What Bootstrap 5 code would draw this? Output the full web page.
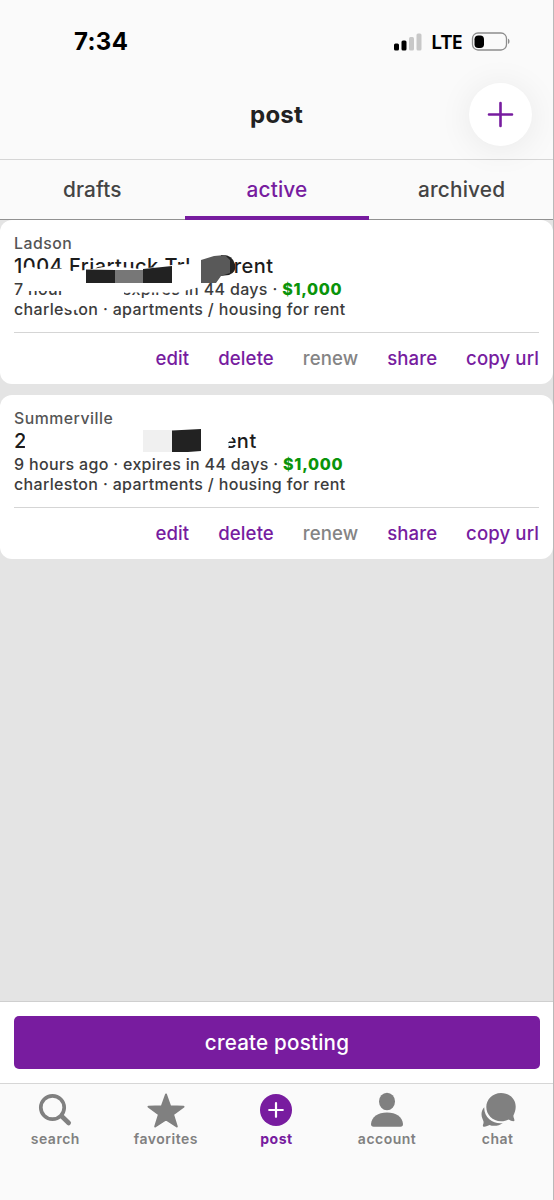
<!DOCTYPE html>
<html lang="en">
<head>
<meta charset="utf-8">
<meta name="viewport" content="width=device-width, initial-scale=1">
<title>post</title>
<link rel="stylesheet" href="https://cdn.jsdelivr.net/npm/bootstrap@5.3.0/dist/css/bootstrap.min.css">
<style>
:root{--purple:#771c9f}
body{font-family:Inter,"Liberation Sans",sans-serif;background:#e4e4e4;color:#3c3c3c}
.screen{height:1200px;width:554px;border-right:1px solid #b9b9b9;overflow:hidden}
.status-row{height:70px;padding:13px 42px 0 74px;color:#000}
.clock{font-size:24px;font-weight:700;letter-spacing:.35px}
.lte{font-size:20px;font-weight:600;line-height:26px;letter-spacing:-.7px;margin:0 9px 0 9px;font-family:"Noto Sans",sans-serif}
.top-area{background:#fafafa}
.title-row{height:90px;border-bottom:1px solid #d6d6d6}
.title-row h1{font-size:24px;font-weight:700;color:#222;letter-spacing:.2px;line-height:90px;margin:0}
.add-btn{right:21px;top:13px;width:63px;height:63px;background:#fff;box-shadow:0 3px 34px rgba(0,0,0,.075);border:0;padding:0}
.tab-row{height:60px;border-bottom:1px solid #919191}
.tab-row a{font-size:20.8px;font-weight:500;color:#444;text-decoration:none;line-height:59px;letter-spacing:.15px;height:60px;flex:0 0 184.67px}
.tab-row a.on{color:var(--purple);border-bottom:4px solid var(--purple)}
.post-card{height:164px;background:#fff;border-radius:12px;padding:14px 14px 0 14px;margin-bottom:11px;font-size:16px;font-weight:500;line-height:20px}
.place{letter-spacing:.5px;font-size:15.8px;color:#555}
.headline{font-size:20px;font-weight:500;line-height:25px;color:#1c1c1c;letter-spacing:.48px}
.meta{letter-spacing:.33px;font-size:16px}
.price{color:#0a940a;font-weight:800;letter-spacing:.7px}
.acts{border-top:1px solid #d5d5d5;margin-top:13px;height:51px;gap:28.9px}
.acts a{font-size:18.6px;font-weight:540;color:var(--purple);text-decoration:none;letter-spacing:.1px}
.acts a.off{color:#848484}
.redact{left:0;top:0;pointer-events:none}
.create-bar{height:82px;background:#fff;border-top:1px solid #cfcfcf;padding:14px 13px 0 14px}
.create-btn{height:53px;background:#781c9f;color:#fff;border:0;border-radius:5px;font-size:20.6px;font-weight:500;letter-spacing:.2px;padding:2px 0 0}
.tabbar{height:117px;background:#fafafa;border-top:1px solid #d6d6d6;padding:8px 0 0}
.tabbar a{width:110.7px;color:#808080;text-decoration:none;font-size:14px;font-weight:600;letter-spacing:.5px;line-height:18px}
.tabbar a.on{color:var(--purple);font-weight:700}
.tabbar svg{display:block;margin:0 auto 2px}
</style>
</head>
<body>
<div class="screen d-flex flex-column">
  <header class="top-area">
    <div class="status-row d-flex justify-content-between align-items-center">
      <span class="clock">7:34</span>
      <div class="d-flex align-items-center">
        <svg width="29" height="18" viewBox="0 0 29 18"><rect x="1" y="10.500" width="5" height="7" rx="1.500"/><rect x="8.500" y="7.500" width="5" height="10" rx="1.500"/><rect x="16" y="4" width="5" height="13.500" rx="1.500" fill="#c8c8c8"/><rect x="23.500" y="0.500" width="5" height="17" rx="1.500" fill="#c8c8c8"/></svg>
        <span class="lte">LTE</span>
        <svg width="40" height="20" viewBox="0 0 40 20"><rect x="1.500" y="1" width="34" height="17" rx="5.500" fill="none" stroke="#8d8d8d" stroke-width="1.300"/><rect x="3.500" y="3.500" width="9.500" height="12.500" rx="3.800"/><path d="M37 6.700c2 .6 2 4.600 0 5.200z" fill="#8d8d8d"/></svg>
      </div>
    </div>
    <div class="title-row text-center position-relative">
      <h1>post</h1>
      <button class="add-btn position-absolute rounded-circle" aria-label="new"><svg class="d-block mx-auto" width="27" height="27" viewBox="0 0 27 27"><path d="M13.500 2v23M2 13.500h23" stroke="#771c9f" stroke-width="2.600" stroke-linecap="round"/></svg></button>
    </div>
    <nav class="tab-row d-flex text-center">
      <a href="#">drafts</a><a href="#" class="on">active</a><a href="#">archived</a>
    </nav>
  </header>
  <main class="flex-grow-1">
    <article class="post-card position-relative">
      <div class="place">Ladson</div>
      <div class="headline">1004 Friartuck Trl <span class="d-inline-block" style="width:37px"></span>rent</div>
      <div class="meta">7 hours ago · expires in 44 days · <span class="price">$1,000</span></div>
      <div class="meta">charleston · apartments / housing for rent</div>
      <div class="acts d-flex justify-content-end align-items-center"><a href="#">edit</a><a href="#">delete</a><a class="off">renew</a><a href="#">share</a><a href="#">copy url</a></div>
      <svg class="redact position-absolute" width="300" height="100" viewBox="0 0 300 100">
        <path fill="#fff" d="M24 48L30 46L38 49L64 48.500L72 51L86 50L110 46L140 49L172 45L192 44L192 37L202 37L202 62L206 65L196 68L184 71L180 72.500L124 72.500L123 84L78 84L78 89Q71 92 65 88L64 80L62 71L28 71L23 66Z"/>
        <path fill="#fff" d="M63 62H123V82H63z"/>
        <path fill="#222" d="M86 49.500L115 50V63H86z M143 49L172 46V63H143z"/>
        <path fill="#777" d="M115 50H143V63H115z"/>
        <path fill="#222" d="M221 35Q232 34 235 44Q237 52 229 55L220 56z"/>
        <path fill="#595959" d="M201 40L214 36L225 35L230 40V53L221 56L216 63H201z"/>
      </svg>
    </article>
    <article class="post-card position-relative">
      <div class="place">Summerville</div>
      <div class="headline">2<span class="d-inline-block" style="width:190px"></span>rent</div>
      <div class="meta">9 hours ago · expires in 44 days · <span class="price">$1,000</span></div>
      <div class="meta">charleston · apartments / housing for rent</div>
      <div class="acts d-flex justify-content-end align-items-center"><a href="#">edit</a><a href="#">delete</a><a class="off">renew</a><a href="#">share</a><a href="#">copy url</a></div>
      <svg class="redact position-absolute" width="300" height="100" viewBox="0 0 300 100">
        <path fill="#fff" d="M205 35H232V43L228 48L229 51L226 56H205z M25 35H30V56H25z"/>
        <path fill="#f0f0f0" d="M143 35H173V57H143z"/>
        <path fill="#222" d="M172 35.500L201 34V56L188 57H172z"/>
      </svg>
    </article>
  </main>
  <div class="create-bar"><button class="create-btn w-100">create posting</button></div>
  <nav class="tabbar d-flex text-center">
    <a href="#"><svg width="36" height="36" viewBox="0 0 36 36" fill="none" stroke="#808080"><circle cx="15.500" cy="15.500" r="11.700" stroke-width="3.700"/><path d="M24.500 24L31.700 31" stroke-width="4.600" stroke-linecap="round"/></svg>search</a>
    <a href="#"><svg width="38" height="36" viewBox="0 0 38 36"><path fill="#808080" stroke="#808080" stroke-width="2" stroke-linejoin="round" d="M19 2.500L23.200 14.300L36.500 14.700L26 22.400L29.800 34.500L19 27.500L8.200 34.500L12 22.400L1.500 14.700L14.800 14.300Z"/></svg>favorites</a>
    <a href="#" class="on"><svg width="36" height="36" viewBox="0 0 36 36"><circle cx="18" cy="18" r="16" fill="#781c9f"/><path d="M18 11.200v13.600M11.200 18h13.600" stroke="#fff" stroke-width="2.200" stroke-linecap="round"/></svg>post</a>
    <a href="#"><svg width="36" height="36" viewBox="0 0 36 36" fill="#808080"><ellipse cx="18" cy="9.500" rx="8" ry="8.700"/><path d="M4.500 34.800Q2 34.800 2 32C2.500 25 9 20.600 18 20.600S33.500 25 34 32Q34 34.800 31.500 34.800Z"/></svg>account</a>
    <a href="#"><svg width="38" height="36" viewBox="0 0 38 36" fill="#808080"><path d="M5.200 15.200C3.500 17 2.500 19.500 2.500 22.300C2.500 25.500 4 27.500 4.500 29.500C5 31.500 3.300 33 4 34.300C5 35.700 9 33.800 10.500 33C14 34.500 20 34.200 23.800 31C16 32.500 5 27 5.200 15.200Z"/><path d="M22 1C30.500 1 36.700 7 36.700 14.800C36.700 18.500 35.500 21 34.500 23.200C34 25 35.500 27 35.500 28.500C35 30 31.500 28.500 29.500 27.400C27.500 28.600 25 29.200 22 29.200C13.500 29.200 7.300 22.500 7.300 15S13.500 1 22 1Z"/></svg>chat</a>
  </nav>
</div>
<script src="https://cdn.jsdelivr.net/npm/bootstrap@5.3.0/dist/js/bootstrap.bundle.min.js"></script>
</body>
</html>
